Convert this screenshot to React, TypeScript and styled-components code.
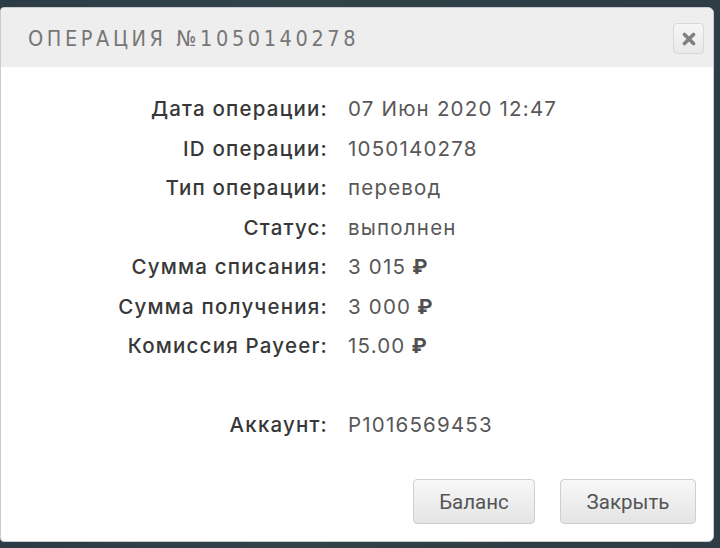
import React from "react";
import styled, { createGlobalStyle } from "styled-components";

const Global = createGlobalStyle`
  html, body { margin: 0; padding: 0; }
  body {
    width: 720px;
    height: 548px;
    overflow: hidden;
    background: #2f3d47;
  }
`;

const Backdrop = styled.div`
  width: 720px;
  height: 548px;
  box-sizing: border-box;
  padding: 7px 6px 6px 0;
  background: linear-gradient(90deg, #2c3b45 0%, #33434a 40%, #2f3f46 60%, #2e3c46 100%);
`;

const Dialog = styled.div`
  width: 714px;
  height: 535px;
  box-sizing: border-box;
  background: #ffffff;
  border: 1px solid #c9ccce;
  border-radius: 4px 6px 6px 4px;
  overflow: hidden;
  display: flex;
  flex-direction: column;
`;

const Header = styled.div`
  height: 59px;
  box-sizing: border-box;
  background: #eeeeee;
  display: flex;
  align-items: center;
  justify-content: space-between;
  padding: 0 9px 0 27px;
`;

const Title = styled.div`
  font-family: "DejaVu Sans Condensed", "DejaVu Sans", sans-serif;
  font-stretch: condensed;
  font-size: 21.5px;
  letter-spacing: 3.6px;
  color: #767676;
  font-weight: 400;
  margin-top: 2px;
`;

const CloseButton = styled.button`
  width: 31px;
  height: 31px;
  box-sizing: border-box;
  border: 1px solid #d8d8d8;
  border-radius: 4px;
  background: linear-gradient(#f6f6f6, #e9e9e9);
  display: flex;
  align-items: center;
  justify-content: center;
  padding: 0;
  margin-top: 2px;
`;

const Body = styled.div`
  flex: 1;
  display: flex;
  flex-direction: column;
  padding: 22px 17px 17px 0;
`;

const Grid = styled.div`
  display: grid;
  grid-template-columns: 327px 1fr;
  column-gap: 20px;
  grid-auto-rows: 39.5px;
  align-items: center;
`;

const Label = styled.div`
  font-family: Inter, "Open Sans", sans-serif;
  font-size: 20.5px;
  letter-spacing: 1.2px;
  font-weight: 500;
  color: #383838;
  text-align: right;
  white-space: nowrap;
`;

const Value = styled.div`
  font-family: Inter, "Open Sans", sans-serif;
  font-size: 20.5px;
  letter-spacing: 1.2px;
  font-weight: 400;
  color: #585858;
  white-space: nowrap;
`;

const Rub = styled.span`
  font-weight: 700;
  color: #505050;
`;

const Spacer = styled.div`
  grid-column: 1 / span 2;
`;

const Footer = styled.div`
  margin-top: auto;
  display: flex;
  justify-content: flex-end;
  gap: 25px;
`;

const Button = styled.button<{ $w: number }>`
  width: ${(p) => p.$w}px;
  height: 45px;
  box-sizing: border-box;
  border: 1px solid #cfcfcf;
  border-radius: 4px;
  background: linear-gradient(#f8f8f8 0%, #eeeeee 50%, #e4e4e4 100%);
  font-family: Roboto, "Liberation Sans", sans-serif;
  font-size: 20.5px;
  color: #555555;
  padding: 0;
`;

const rows: [string, string, boolean][] = [
  ["Дата операции:", "07 Июн 2020 12:47", false],
  ["ID операции:", "1050140278", false],
  ["Тип операции:", "перевод", false],
  ["Статус:", "выполнен", false],
  ["Сумма списания:", "3 015", true],
  ["Сумма получения:", "3 000", true],
  ["Комиссия Payeer:", "15.00", true],
];

export default function App() {
  return (
    <>
      <Global />
      <Backdrop>
        <Dialog>
          <Header>
            <Title>ОПЕРАЦИЯ №1050140278</Title>
            <CloseButton aria-label="close">
              <svg width="14" height="14" viewBox="0 0 14 14">
                <path d="M2.5 2.5 L11.5 11.5 M11.5 2.5 L2.5 11.5" stroke="#808080" strokeWidth="3.6" strokeLinecap="round" />
              </svg>
            </CloseButton>
          </Header>
          <Body>
            <Grid>
              {rows.map(([l, v, rub]) => (
                <React.Fragment key={l}>
                  <Label>{l}</Label>
                  <Value>
                    {v}
                    {rub && <Rub> ₽</Rub>}
                  </Value>
                </React.Fragment>
              ))}
              <Spacer />
              <Label>Аккаунт:</Label>
              <Value>P1016569453</Value>
            </Grid>
            <Footer>
              <Button $w={122}>Баланс</Button>
              <Button $w={136}>Закрыть</Button>
            </Footer>
          </Body>
        </Dialog>
      </Backdrop>
    </>
  );
}
